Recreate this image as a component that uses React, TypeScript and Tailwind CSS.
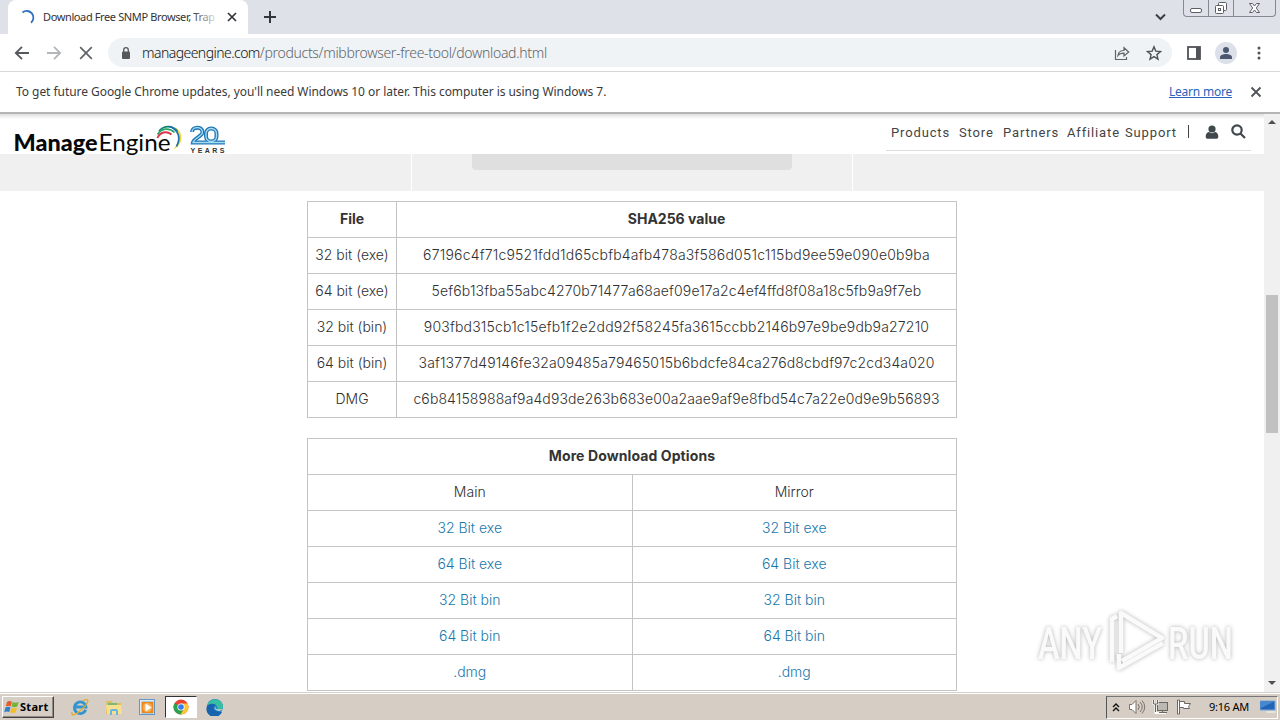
import React from 'react';

const checksums = [
  { file: '32 bit (exe)', hash: '67196c4f71c9521fdd1d65cbfb4afb478a3f586d051c115bd9ee59e090e0b9ba', fit: 'tracking-[0.2px]' },
  { file: '64 bit (exe)', hash: '5ef6b13fba55abc4270b71477a68aef09e17a2c4ef4ffd8f08a18c5fb9a9f7eb', fit: 'tracking-[0.14px]' },
  { file: '32 bit (bin)', hash: '903fbd315cb1c15efb1f2e2dd92f58245fa3615ccbb2146b97e9be9db9a27210', fit: 'tracking-[0.18px]' },
  { file: '64 bit (bin)', hash: '3af1377d49146fe32a09485a79465015b6bdcfe84ca276d8cbdf97c2cd34a020', fit: 'tracking-[0.13px]' },
  { file: 'DMG', hash: 'c6b84158988af9a4d93de263b683e00a2aae9af9e8fbd54c7a22e0d9e9b56893', fit: 'tracking-[0.11px]' },
];

const downloads = ['32 Bit exe', '64 Bit exe', '32 Bit bin', '64 Bit bin', '.dmg'];

const cell = 'h-9 border border-[#c4c4c4] px-0 pt-0 pb-[2px] text-center';

const TabStrip: React.FC = () => (
  <div className="flex h-[34px] bg-[#dee1e8]">
    <div className="ml-2 flex h-[34px] w-[240px] items-center rounded-t-lg bg-white pl-3">
      <svg className="h-4 w-4" viewBox="0 0 16 16" fill="none">
        <path d="M2.500 3.500A6.500 6.500 0 1 1 11 13.800" stroke="#2f72c4" strokeWidth="1.800" />
      </svg>
      <div className="relative ml-[7px] w-[177px] whitespace-nowrap text-[11px] leading-4 tracking-[-0.38px] text-[#333]">
        Download Free SNMP Browser, Trap
        <div className="absolute inset-y-0 right-0 w-7 bg-linear-to-r from-transparent to-white" />
      </div>
      <svg className="ml-[6px] h-3 w-3" viewBox="0 0 12 12" stroke="#33373b" strokeWidth="1.700">
        <path d="M2 2l8 8M10 2l-8 8" />
      </svg>
    </div>
    <svg className="mt-[10px] ml-[15px] h-[14px] w-[14px]" viewBox="0 0 14 14" stroke="#33373b" strokeWidth="2">
      <path d="M7 1v12M1 7h12" />
    </svg>
    <svg className="mt-[13px] ml-auto h-2 w-[11px]" viewBox="0 0 11 8" fill="none" stroke="#3c4043" strokeWidth="2">
      <path d="M1 1.500l4.500 4.500L10 1.500" />
    </svg>
    <div className="mr-1 ml-[17px] flex h-[17px] w-[93px] rounded-b-[4px] border border-t-0 border-[#858991]">
      <svg className="h-4 w-[91px]" viewBox="0 0 91 16" fill="none" stroke="#5b5e66">
        <path d="M24.500 0v16M49.500 0v16" stroke="#858991" />
        <rect x="6.500" y="8.500" width="11" height="4" rx="1.500" fill="#fff" />
        <rect x="34.500" y="2.500" width="8" height="8" rx="1" fill="#fff" />
        <rect x="31.500" y="5.500" width="8" height="8" rx="1" fill="#fff" />
        <rect x="34.500" y="8.500" width="2" height="2" />
        <path d="M65.500 3.500h3l2 2.500 2-2.500h3l-3.200 4.500 3.200 4.500h-3l-2-2.500-2 2.500h-3l3.200-4.500z" fill="#fff" />
      </svg>
    </div>
  </div>
);

const Toolbar: React.FC = () => (
  <div className="flex h-[38px] items-center border-b border-[#d5d7d9] bg-white">
    <svg className="ml-[14px] h-4 w-4" viewBox="0 0 16 16" fill="none" stroke="#55585c" strokeWidth="1.800">
      <path d="M15 8H2M8 1.800L1.800 8 8 14.200" />
    </svg>
    <svg className="ml-4 h-4 w-4" viewBox="0 0 16 16" fill="none" stroke="#b4b6b9" strokeWidth="1.800">
      <path d="M1 8h13M8 1.800L14.200 8 8 14.200" />
    </svg>
    <svg className="ml-4 h-4 w-4" viewBox="0 0 16 16" stroke="#5f6368" strokeWidth="1.700">
      <path d="M2.200 2.200l11.600 11.600M13.800 2.200L2.200 13.800" />
    </svg>
    <div className="ml-[14px] flex h-[29px] w-[1064px] items-center rounded-full bg-[#eff3f6]">
      <svg className="ml-[13px] h-3 w-[10px]" viewBox="0 0 10 12">
        <rect x="1" y="4.500" width="8" height="7.500" rx="1" fill="#55585c" />
        <path d="M2.700 5V3a2.300 2.300 0 0 1 4.600 0v2" fill="none" stroke="#55585c" strokeWidth="1.300" />
      </svg>
      <div className="ml-[11px] whitespace-nowrap text-[14px] font-light leading-5 tracking-[-0.34px] text-[#5f6368]">
        <span className="tracking-[-0.55px] text-[#111]">manageengine.com</span>
        <span className="tracking-[-0.3px]">/products/mibbrowser-free-tool/download.html</span>
      </div>
      <svg className="ml-auto h-4 w-4" viewBox="0 0 16 16" fill="none" stroke="#5f6368" strokeWidth="1.200">
        <path d="M1.500 5v9.500h11V12M4 10.500c.4-3.500 2.500-5 6-5V2.700L14.700 7 10 11V8.200c-3 0-4.700.5-6 2.300z" />
      </svg>
      <svg className="mr-[10px] ml-4 h-4 w-4" viewBox="0 0 16 16" fill="none" stroke="#505358" strokeWidth="1.400">
        <path d="M8 1.800l1.800 4.300 4.700.4-3.600 3.100 1.100 4.600L8 11.700l-4 2.500 1.100-4.600L1.500 6.500l4.700-.4z" />
      </svg>
    </div>
    <svg className="ml-[15px] h-[14px] w-[14px]" viewBox="0 0 14 14">
      <rect x="1" y="1" width="12" height="12" fill="none" stroke="#505358" strokeWidth="1.800" />
      <path d="M9 1h4v12H9z" fill="#505358" />
    </svg>
    <svg className="ml-[14px] h-[22px] w-[22px]" viewBox="0 0 22 22">
      <circle cx="11" cy="11" r="11" fill="#dce0e8" />
      <circle cx="11" cy="8" r="3" fill="#4c5870" />
      <path d="M5 17v-1.500c0-2.600 3.500-3.500 6-3.500s6 .9 6 3.500V17z" fill="#4c5870" />
    </svg>
    <svg className="ml-5 h-[14px] w-1" viewBox="0 0 4 14" fill="#505358">
      <circle cx="2" cy="2" r="1.500" /><circle cx="2" cy="7" r="1.500" /><circle cx="2" cy="12" r="1.500" />
    </svg>
  </div>
);

const Infobar: React.FC = () => (
  <div className="flex h-10 items-center bg-white pl-4 text-[12px] text-[#3a3a3a]">
    <span className="whitespace-nowrap tracking-[-0.05px]">
      To get future Google Chrome updates, you'll need Windows 10 or later. This computer is using Windows 7.
    </span>
    <a className="ml-auto whitespace-nowrap tracking-[-0.22px] text-[#2a62b8] underline">Learn more</a>
    <svg className="mr-[18px] ml-[18px] h-3 w-3" viewBox="0 0 12 12" stroke="#505358" strokeWidth="1.800">
      <path d="M1.500 1.500l9 9M10.500 1.500l-9 9" />
    </svg>
  </div>
);

const SiteLogo: React.FC = () => (
  <svg className="ml-[13px] h-9 w-[214px]" viewBox="13 121 214 36" fill="none">
    <text x="13.500" y="151" textLength="84" lengthAdjust="spacingAndGlyphs" fontFamily="Lato" fontWeight="900" fontSize="22" fill="#080808">Manage</text>
    <text x="98.500" y="151" textLength="72" lengthAdjust="spacingAndGlyphs" fontFamily="Lato" fontSize="23" fill="#080808">Engine</text>
    <path d="M175 127c8 5 10 17-2 22.500 6-6 7-14 2-22.500z" fill="#f0d640" />
    <path d="M159 131c5-6 14-6 18.500.5" stroke="#14836f" strokeWidth="1.700" />
    <path d="M157.500 134.500c4-6.500 12-7 17-2" stroke="#2aa36b" strokeWidth="1.700" />
    <path d="M157.500 138c2.500-6 9-7.500 14-3.500" stroke="#d93749" strokeWidth="1.900" />
    <path d="M169 126.500c9 2.500 12.500 11 7.500 20" stroke="#1c70b8" strokeWidth="1.700" />
    <path d="M192 132c0-5.500 10.500-6 10.500 0 0 4.500-8.500 6-9.500 10.500h32" stroke="#2379b5" strokeWidth="4" />
    <rect x="206" y="128.500" width="10.500" height="13" rx="5" stroke="#2379b5" strokeWidth="4" />
    <path d="M192 132c0-5.500 10.500-6 10.500 0 0 4.500-8.500 6-9.500 10.500h32" stroke="#a5dcf2" strokeWidth="1.300" />
    <rect x="206" y="128.500" width="10.500" height="13" rx="5" stroke="#a5dcf2" strokeWidth="1.300" />
    <text x="190.500" y="153" textLength="34" fontFamily="Liberation Sans" fontWeight="700" fontSize="7" fill="#333">YEARS</text>
  </svg>
);

const SiteHeader: React.FC = () => (
  <div className="flex h-10 bg-white bg-linear-to-b from-[#dedede] to-white to-[5px] pt-[7px]">
    <SiteLogo />
    <div className="mr-[13px] ml-auto flex h-[30px] w-[365px] items-center border-b border-[#ddd] pb-[6px] pl-[5px] font-[Roboto] text-[13px] tracking-[0.85px] text-[#444]">
      <span className="w-[68px]">Products</span>
      <span className="w-[44px]">Store</span>
      <span className="w-[64px]">Partners</span>
      <span className="w-[58px]">Affiliate</span>
      <span className="w-[63px]">Support</span>
      <span className="mb-[3px] h-[13px] w-px bg-[#444]" />
      <svg className="mb-[2px] ml-[16px] h-[14px] w-[14px]" viewBox="0 0 14 14" fill="#40484c">
        <circle cx="7" cy="4" r="3.600" />
        <path d="M.7 11.500c0-3 1.800-4.500 3.300-4.500 1.500 1.500 4.500 1.500 6 0 1.500 0 3.300 1.500 3.300 4.500 0 1.500-.8 2.300-2 2.300H2.700c-1.200 0-2-.8-2-2.300z" />
      </svg>
      <svg className="mb-[2px] ml-3 h-[15px] w-[15px]" viewBox="0 0 15 15" fill="none" stroke="#40484c" strokeWidth="2.200">
        <circle cx="6" cy="6" r="4.700" /><path d="M9.500 9.500l4.500 4.500" />
      </svg>
    </div>
  </div>
);

const Content: React.FC = () => (
  <div className="h-[538px] overflow-hidden bg-white font-[Inter] text-[14px] font-light leading-5 text-[#303030]">
    <div className="flex h-[37px] bg-[#f0f0f0]">
      <div className="w-[411px]" />
      <div className="flex w-[442px] justify-center border-x border-white">
        <div className="h-4 w-80 rounded-b-[4px] bg-[#dfdfdf]" />
      </div>
    </div>
    <table className="mt-[10px] ml-[307px] w-[650px] table-fixed border-collapse">
      <tbody>
        <tr className="font-bold text-[#333]">
          <td className={`${cell} w-[89px]`}>File</td>
          <td className={cell}>SHA256 value</td>
        </tr>
        {checksums.map((row) => (
          <tr key={row.file}>
            <td className={cell}>{row.file}</td>
            <td className={cell}><span className={row.fit}>{row.hash}</span></td>
          </tr>
        ))}
      </tbody>
    </table>
    <table className="mt-5 ml-[307px] w-[650px] table-fixed border-collapse">
      <tbody>
        <tr className="font-bold text-[#333]">
          <td className={`${cell} tracking-[0.1px]`} colSpan={2}>More Download Options</td>
        </tr>
        <tr>
          <td className={cell}>Main</td>
          <td className={cell}>Mirror</td>
        </tr>
        {downloads.map((name) => (
          <tr key={name} className="text-[#1878ac]">
            <td className={cell}><a>{name}</a></td>
            <td className={cell}><a>{name}</a></td>
          </tr>
        ))}
      </tbody>
    </table>
  </div>
);

const Scrollbar: React.FC = () => (
  <div className="flex h-[578px] w-4 flex-col items-center bg-[#f0f0f0]">
    <div className="mt-[6px] border-x-4 border-b-4 border-x-transparent border-b-[#505050]" />
    <div className="mt-[171px] h-[138px] w-3 bg-[#c1c1c1]" />
    <div className="mt-auto mb-[7px] border-x-4 border-t-4 border-x-transparent border-t-[#505050]" />
  </div>
);

const Taskbar: React.FC = () => (
  <div className="flex h-7 items-center border-t border-[#d4d0c8] bg-[#d6cec5] pt-px shadow-[inset_0_1px_0_#fff]">
    <button className="ml-0.5 flex h-[22px] w-[52px] items-center border border-t-white border-r-[#444] border-b-[#444] border-l-white pl-px text-[11px] font-bold text-black shadow-[inset_-1px_-1px_0_#918b83]">
      <svg className="h-4 w-4" viewBox="0 0 16 16">
        <path d="M3 3c2-1.500 3-1 5-.2L6.700 7.300C5 6.500 3.500 6.500 1.800 7.500z" fill="#e75b25" />
        <path d="M8.700 3c2 .9 4 1 6-.3l-1.400 4.800c-2 1-4 .9-5.800.1z" fill="#72b43b" />
        <path d="M1.500 8.500c1.700-1 3.200-1 5-.2L5.200 13C3.500 12.200 2 12.200.2 13.200z" fill="#2c80cb" />
        <path d="M7.300 8.700c1.800.8 3.800.9 5.700 0l-1.400 4.600c-1.800.9-3.800.9-5.600 0z" fill="#f2be28" />
      </svg>
      <span className="tracking-[0.3px]">Start</span>
    </button>
    <svg className="ml-[17px] h-[18px] w-[18px]" viewBox="0 0 18 18" fill="none">
      <path d="M14.700 11.800A5.800 5.800 0 1 1 15 9H5" stroke="#3295cf" strokeWidth="2.800" />
      <path d="M1 14c-1 5 4 2.500 8.500-1.500S18 4 16.500 2c-1-1-3.500.2-5 1" stroke="#dcac35" strokeWidth="1.400" />
    </svg>
    <svg className="ml-4 h-[18px] w-[18px]" viewBox="0 0 18 18">
      <path d="M1.500 3h5l1.500 2h8v11h-15z" fill="#dfbd5a" />
      <path d="M3 5h9v4H3z" fill="#7cba74" /><path d="M1 7h15l1 9H2z" fill="#f6e08f" />
      <path d="M5 17v-4q0-2 2-2h4q2 0 2 2v4h-2v-4H7v4z" fill="#68b5dc" />
    </svg>
    <svg className="ml-4 h-[17px] w-[17px]" viewBox="0 0 17 17">
      <rect x=".5" y=".5" width="15" height="15" fill="#e0edf7" stroke="#6796bd" />
      <rect x="2.500" y="2.500" width="12" height="12" rx="1" fill="#ed8a1d" stroke="#a7c9e3" />
      <circle cx="8.500" cy="8.500" r="4.500" fill="#f6b25c" />
      <path d="M6.500 4.500v8l6-4z" fill="#fff" />
    </svg>
    <div className="ml-[9px] flex h-[22px] w-[32px] items-center justify-center border border-t-[#333] border-r-white border-b-white border-l-[#333] bg-white">
      <svg className="h-4 w-4" viewBox="0 0 16 16">
        <circle cx="8" cy="8" r="7.500" fill="#e84435" />
        <path d="M8 8L1.500 4.200A7.500 7.500 0 0 0 7.500 15.500L11 9.800z" fill="#2ba24c" />
        <path d="M8 4.500h6.600A7.500 7.500 0 0 1 7.500 15.500L11 9.800z" fill="#fcc934" />
        <circle cx="8" cy="8" r="3.600" fill="#fff" /><circle cx="8" cy="8" r="2.800" fill="#367bea" />
      </svg>
    </div>
    <svg className="ml-[9px] h-[18px] w-[18px]" viewBox="0 0 18 18">
      <circle cx="9" cy="9" r="8" fill="#1686cb" />
      <path d="M1 8C3 0 15-1 17 8c0 4-3 5-6 3.500 2-5-5-7.500-10-3.500z" fill="#38bea0" />
      <path d="M1 8c4-4 9-2 9 0-4 0-4 6 6 6A8 8 0 0 1 1 8z" fill="#1763ae" />
      <path d="M10 8c-2 2 0 4.500 7 3-1 1.500-4 2.500-6 1.500-3-1-3-4-1-4.500z" fill="#d6cec5" />
    </svg>
    <div className="mr-0.5 ml-auto flex h-[23px] w-[172px] items-center border border-t-[#777] border-r-white border-b-white border-l-[#555] text-[11px] text-black">
      <svg className="ml-[5px] h-[9px] w-2" viewBox="0 0 8 9" fill="none" stroke="#111" strokeWidth="1.400">
        <path d="M1 4l3-3 3 3M1 8l3-3 3 3" />
      </svg>
      <svg className="ml-[8px] h-4 w-[18px]" viewBox="0 0 18 16" fill="#fff" stroke="#77736f">
        <path d="M1.500 5.500H4l4-4v13l-4-4H1.500z" /><path d="M10 5q2.500 3 0 6M12 3q4.500 5 0 10M14 1.500q5.500 6.500 0 13" fill="none" />
      </svg>
      <svg className="ml-[6px] h-4 w-[17px]" viewBox="0 0 17 16" fill="none" stroke="#6b6864">
        <rect x="5.500" y="3.500" width="10" height="8" fill="#bbb8b3" /><path d="M1.500 1v4h4V1M3.500 5v9h10M8 14h6" stroke="#fff" strokeWidth="2" />
        <path d="M1.500 1v4h4V1M3.500 5v8M7 13.500h8M10.500 12v2" />
      </svg>
      <svg className="ml-[7px] h-4 w-4" viewBox="0 0 16 16" fill="#fff" stroke="#6b6864">
        <path d="M1.500 1v14h2V1zM3.500 2.500h5v2h6l-2 3 1 2h-6v-1h-4z" />
      </svg>
      <span className="ml-[17px] w-[41px] whitespace-nowrap tracking-[-0.25px]">9:16 AM</span>
      <svg className="ml-[10px] h-[14px] w-[16px]" viewBox="0 0 16 14">
        <path d="M0 1h15v9H0z" fill="#2464b8" stroke="#77a8d6" /><path d="M1 2h12L1 8z" fill="#4689d0" /><path d="M6 11h9l1 2H7z" fill="#e7e4de" />
      </svg>
    </div>
  </div>
);

const Watermark: React.FC = () => (
  <svg className="absolute top-[604px] left-[1020px] h-[80px] w-[240px] drop-shadow-[0_0_2px_rgba(0,0,0,0.3)]" viewBox="1020 604 240 80">
    <g fill="#fafafa" fontFamily="Roboto" fontSize="45" fontWeight="500">
      <text x="1038" y="659" textLength="64" lengthAdjust="spacingAndGlyphs">ANY</text>
      <text x="1168" y="659" textLength="65" lengthAdjust="spacingAndGlyphs">RUN</text>
    </g>
    <g fill="none" stroke="#fafafa" strokeWidth="4.500" strokeLinejoin="round">
      <path d="M1121 653V613l41 25-40 23" />
      <path d="M1117 616l-5 3v43" /><path d="M1119 654v14l44-25" />
    </g>
  </svg>
);

const App: React.FC = () => {
  return (
    <div className="relative h-[720px] w-[1280px] overflow-hidden bg-white font-['Noto_Sans',sans-serif]">
      <TabStrip />
      <Toolbar />
      <Infobar />
      <div className="h-0.5 bg-[#b5b5b5]" />
      <div className="flex h-[578px]">
        <div className="w-[1264px]">
          <SiteHeader />
          <Content />
        </div>
        <Scrollbar />
      </div>
      <Taskbar />
      <Watermark />
    </div>
  );
};

export default App;
